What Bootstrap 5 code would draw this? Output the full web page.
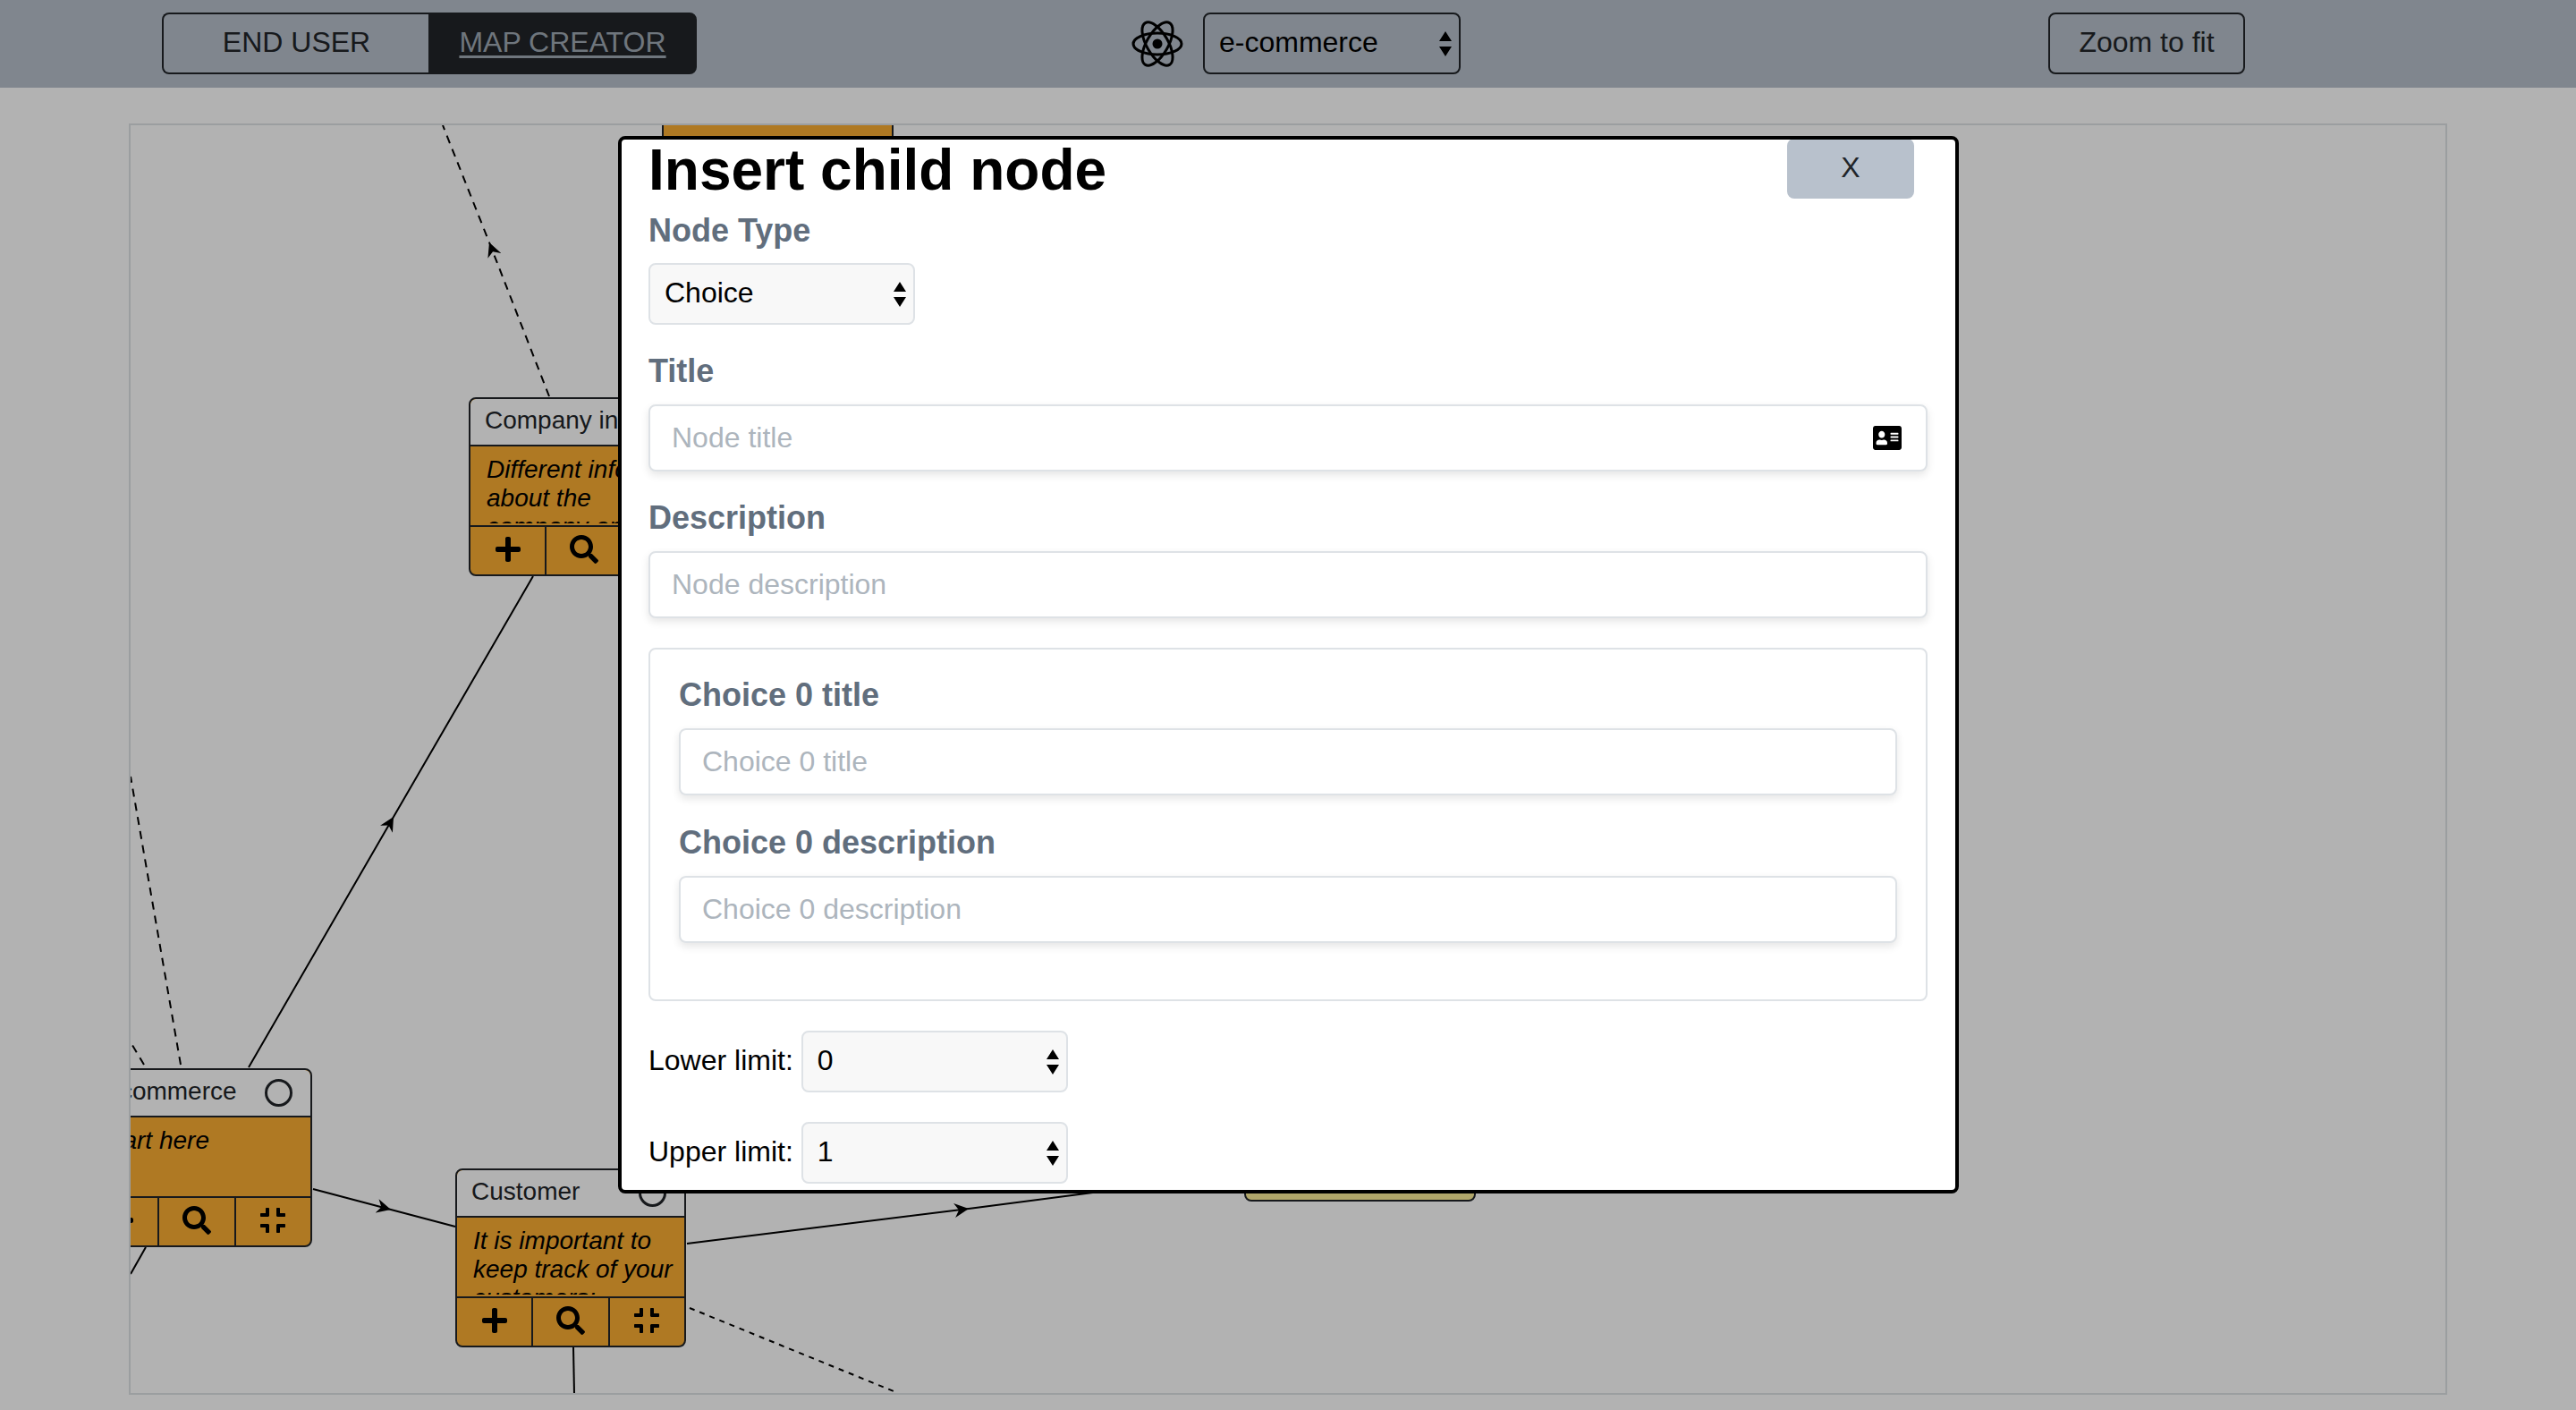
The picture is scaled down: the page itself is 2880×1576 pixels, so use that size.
<!DOCTYPE html>
<html lang="en">
<head>
    <meta charset="UTF-8">
    <title>Map creator</title>
    <link href="https://cdn.jsdelivr.net/npm/bootstrap@5.3.0/dist/css/bootstrap.min.css" rel="stylesheet">
    <style>
        html { font-size: 32px; }
        body { font-family: "Liberation Sans", Arial, sans-serif; background: #fff; color: #212529; }

        /* top bar */
        .top-bar { height: 98px; padding-top: 14px; background: #b8c1cc; }
        .top-btn { height: 69px; display: flex; align-items: center; justify-content: center; padding: 0 0 3px; border: 2px solid #212529; border-radius: 8px; font-size: 32px; color: #212529; background: transparent; }
        .mode-left { width: 299px; border-radius: 8px 0 0 8px; border-right: 0; }
        .mode-right { width: 300px; border-radius: 0 8px 8px 0; background: #212529; color: #a0a9b4; text-decoration: underline; text-underline-offset: 4px; }
        .mode-right:hover { background: #212529; color: #a0a9b4; }
        .map-col { padding-left: 18px; gap: 22px; }
        .map-select { width: 288px; height: 69px; background-color: transparent; border: 2px solid #212529; color: #000; }
        .zoom-btn { width: 220px; }

        /* shared select look, two native looking arrows */
        .arrow-select { padding: 0 40px 4px 16px; border-radius: 8px; font-size: 32px; background-image: url("data:image/svg+xml,%3Csvg xmlns='http://www.w3.org/2000/svg' viewBox='0 0 16 28'%3E%3Cpath d='M8 0l7 11H1zM8 28L1 17h14z'/%3E%3C/svg%3E"); background-repeat: no-repeat; background-position: right 7px center; background-size: 16px 28px; }
        .pick-select { width: 298px; height: 69px; background-color: #f8f8f8; border: 2px solid #dee2e6; color: #000; }

        /* canvas */
        .map-canvas { position: relative; height: 1421px; margin: 40px 144px 0; border: 2px solid #dee2e6; overflow: hidden; }
        .edge-layer { position: absolute; inset: 0; width: 100%; height: 100%; }
        .edge-layer .edge { fill: none; stroke: #000; stroke-width: 2; }
        .edge-layer .dashed { stroke-dasharray: 9 7; }
        .edge-layer .dotted { stroke-dasharray: 6 6; }

        .tree-node { position: absolute; width: 258px; height: 200px; display: flex; flex-direction: column; border: 2px solid #212529; border-radius: 8px; background: #fbae33; overflow: hidden; color: #000; font-size: 28px; }
        .node-head { flex: 0 0 53px; display: flex; align-items: center; justify-content: space-between; padding: 0 20px 4px 16px; background: #fff; border-bottom: 2px solid #212529; border-radius: 6px 6px 0 0; white-space: nowrap; color: #212529; }
        .node-ring { flex: none; width: 31px; height: 31px; margin-top: 4px; border: 3px solid #212529; border-radius: 50%; }
        .node-body { flex: 1 1 auto; padding: 10px 8px 0 18px; min-height: 0; }
        .node-text { height: 76px; overflow: hidden; font-style: italic; line-height: 32px; }
        .node-actions { flex: 0 0 55px; display: flex; border-top: 2px solid #212529; }
        .node-actions > div { flex: 1 1 0; display: flex; align-items: center; justify-content: center; padding-bottom: 3px; }
        .node-actions > div + div { border-left: 2px solid #212529; }
        .ico-plus, .ico-compress { width: 28px; height: 28px; }
        .ico-search { width: 32px; height: 32px; }

        .node-top { left: 594px; top: -60px; width: 259px; }
        .node-company { left: 378px; top: 304px; }
        .node-root { left: -55px; top: 1054px; }
        .node-customer { left: 363px; top: 1166px; }
        .node-other { left: 1245px; top: 1003px; width: 259px; background: #fdee98; }

        /* dialog */
        .modal-backdrop { --bs-backdrop-opacity: .3; }
        .child-dialog { position: fixed; z-index: 1060; left: 691px; top: 152px; width: 1499px; height: 1182px; padding: 0 31px 0 30px; background: #fff; border: 4px solid #000; border-radius: 8px; overflow: hidden; color: #000; }
        .dialog-title { margin: 0 0 11px; font-size: 64px; line-height: 69px; font-weight: 700; color: #000; }
        .close-btn { width: 142px; height: 67px; margin: -1px 15px 0 0; padding: 0 0 4px; background: #b8c1cc; border: 0; border-radius: 8px; font-size: 32px; color: #212529; }
        .field-label { margin: 0 0 16px; font-size: 36px; line-height: 43px; font-weight: 700; color: #616e7d; }
        .label-tight { margin-bottom: 15px; }
        .field-input { height: 75px; padding: 0 24px; font-size: 32px; border: 2px solid #dee2e6; border-radius: 8px; box-shadow: 0 4px 10px rgba(0, 0, 0, .1); }
        .field-input::placeholder { color: #adb5bd; }
        .field-gap { margin-bottom: 30px; }
        .input-wrap { position: relative; }
        .ico-card { position: absolute; right: 29px; top: 24px; width: 32px; height: 27px; }
        .choice-box { margin: 33px 0; padding: 29px 32px 32px; border: 2px solid #dee2e6; border-radius: 8px; }
        .choice-box .field-gap { margin-bottom: 31px; }
        .limit-row { display: flex; align-items: center; gap: 9px; margin-bottom: 33px; font-size: 32px; color: #000; }
        .limit-row label { padding-bottom: 4px; }
    </style>
</head>
<body>
    <nav class="top-bar">
        <div class="row g-0">
            <div class="col-4 d-flex justify-content-center">
                <div class="btn-group">
                    <button type="button" class="btn top-btn mode-left">END USER</button>
                    <a href="#" class="btn top-btn mode-right">MAP CREATOR</a>
                </div>
            </div>
            <div class="col-4 d-flex justify-content-center align-items-center map-col">
                <svg width="58" height="52" viewBox="0 0 58 52" fill="none" stroke="#000" stroke-width="3">
                    <ellipse cx="29" cy="26" rx="27" ry="12"/>
                    <ellipse cx="29" cy="26" rx="27" ry="12" transform="rotate(60 29 26)"/>
                    <ellipse cx="29" cy="26" rx="27" ry="12" transform="rotate(-60 29 26)"/>
                    <circle cx="29" cy="26" r="5.5" fill="#000" stroke="none"/>
                </svg>
                <select class="form-select arrow-select map-select">
                    <option>e-commerce</option>
                </select>
            </div>
            <div class="col-4 d-flex justify-content-center">
                <button type="button" class="btn top-btn zoom-btn">Zoom to fit</button>
            </div>
        </div>
    </nav>

    <div class="map-canvas">
        <svg class="edge-layer">
            <defs>
                <marker id="head" viewBox="0 0 16 16" refX="16" refY="8" markerWidth="16" markerHeight="16" markerUnits="userSpaceOnUse" orient="auto">
                    <path d="M16 8L0 0l5 8-5 8z"/>
                </marker>
            </defs>
            <g transform="translate(-146 -140)">
                <polyline class="edge dashed" points="614,443 547,271 495,140" marker-mid="url(#head)"/>
                <polyline class="edge" points="278,1193 440,913 596,644" marker-mid="url(#head)"/>
                <polyline class="edge" points="350,1329 437,1352 509,1371" marker-mid="url(#head)"/>
                <polyline class="edge" points="768,1390 1083,1351 1300,1323" marker-mid="url(#head)"/>
                <line class="edge dashed" x1="202" y1="1190" x2="146" y2="868"/>
                <line class="edge dashed" x1="161" y1="1190" x2="146" y2="1165"/>
                <line class="edge" x1="163" y1="1394" x2="146" y2="1424"/>
                <line class="edge" x1="641" y1="1505" x2="642" y2="1558"/>
                <line class="edge dotted" x1="771" y1="1462" x2="999" y2="1555"/>
            </g>
        </svg>

        <div class="tree-node node-top"></div>
        <div class="tree-node node-other"></div>

        <div class="tree-node node-company">
            <div class="node-head"><span>Company info</span><span class="node-ring"></span></div>
            <div class="node-body"><div class="node-text">Different info about the company and its products</div></div>
            <div class="node-actions">
                <div><svg class="ico-plus" viewBox="0 32 448 448"><use href="#fa-plus"/></svg></div>
                <div><svg class="ico-search" viewBox="0 0 512 512"><use href="#fa-search"/></svg></div>
                <div><svg class="ico-compress" viewBox="0 32 448 448"><use href="#fa-compress"/></svg></div>
            </div>
        </div>

        <div class="tree-node node-root">
            <div class="node-head"><span>e-commerce</span><span class="node-ring"></span></div>
            <div class="node-body"><div class="node-text">Start here</div></div>
            <div class="node-actions">
                <div><svg class="ico-plus" viewBox="0 32 448 448"><use href="#fa-plus"/></svg></div>
                <div><svg class="ico-search" viewBox="0 0 512 512"><use href="#fa-search"/></svg></div>
                <div><svg class="ico-compress" viewBox="0 32 448 448"><use href="#fa-compress"/></svg></div>
            </div>
        </div>

        <div class="tree-node node-customer">
            <div class="node-head"><span>Customer</span><span class="node-ring"></span></div>
            <div class="node-body"><div class="node-text">It is important to keep track of your customers:</div></div>
            <div class="node-actions">
                <div><svg class="ico-plus" viewBox="0 32 448 448"><use href="#fa-plus"/></svg></div>
                <div><svg class="ico-search" viewBox="0 0 512 512"><use href="#fa-search"/></svg></div>
                <div><svg class="ico-compress" viewBox="0 32 448 448"><use href="#fa-compress"/></svg></div>
            </div>
        </div>
    </div>

    <!-- icon shapes, used by the node action cells -->
    <svg width="0" height="0" class="position-absolute">
        <defs>
            <path id="fa-plus" d="M416 208H272V64c0-17.67-14.33-32-32-32h-32c-17.67 0-32 14.33-32 32v144H32c-17.67 0-32 14.33-32 32v32c0 17.67 14.33 32 32 32h144v144c0 17.67 14.33 32 32 32h32c17.67 0 32-14.33 32-32V304h144c17.67 0 32-14.33 32-32v-32c0-17.67-14.33-32-32-32z"/>
            <path id="fa-search" d="M505 442.7L405.3 343c-4.5-4.5-10.6-7-17-7H372c27.6-35.3 44-79.7 44-128C416 93.1 322.9 0 208 0S0 93.1 0 208s93.1 208 208 208c48.3 0 92.7-16.4 128-44v16.3c0 6.4 2.5 12.5 7 17l99.7 99.7c9.4 9.4 24.6 9.4 33.9 0l28.3-28.3c9.4-9.4 9.4-24.6.1-34zM208 336c-70.7 0-128-57.2-128-128 0-70.7 57.2-128 128-128 70.7 0 128 57.2 128 128 0 70.7-57.2 128-128 128z"/>
            <path id="fa-compress" d="M436 192H312c-13.3 0-24-10.7-24-24V44c0-6.6 5.4-12 12-12h40c6.6 0 12 5.4 12 12v84h84c6.6 0 12 5.4 12 12v40c0 6.6-5.4 12-12 12zm-276-24V44c0-6.6-5.4-12-12-12h-40c-6.6 0-12 5.4-12 12v84H12c-6.6 0-12 5.4-12 12v40c0 6.6 5.4 12 12 12h124c13.3 0 24-10.7 24-24zm0 300V344c0-13.3-10.7-24-24-24H12c-6.6 0-12 5.4-12 12v40c0 6.6 5.4 12 12 12h84v84c0 6.6 5.4 12 12 12h40c6.6 0 12-5.4 12-12zm192 0v-84h84c6.6 0 12-5.4 12-12v-40c0-6.6-5.4-12-12-12H312c-13.3 0-24 10.7-24 24v124c0 6.6 5.4 12 12 12h40c6.6 0 12-5.4 12-12z"/>
        </defs>
    </svg>

    <div class="modal-backdrop show"></div>

    <div class="child-dialog">
        <div class="d-flex justify-content-between align-items-start">
            <h1 class="dialog-title">Insert child node</h1>
            <button type="button" class="btn close-btn">X</button>
        </div>

        <form>
            <div class="field-gap">
                <h5 class="field-label label-tight">Node Type</h5>
                <select class="form-select arrow-select pick-select">
                    <option>Choice</option>
                </select>
            </div>
            <div class="field-gap">
                <h5 class="field-label">Title</h5>
                <div class="input-wrap">
                    <input type="text" class="form-control field-input" placeholder="Node title">
                    <svg class="ico-card" viewBox="0 32 576 448" preserveAspectRatio="none"><path d="M528 32H48C21.5 32 0 53.5 0 80v352c0 26.5 21.5 48 48 48h480c26.5 0 48-21.5 48-48V80c0-26.5-21.5-48-48-48zm-352 96c35.3 0 64 28.7 64 64s-28.7 64-64 64-64-28.7-64-64 28.7-64 64-64zm112 236.8c0 10.6-10 19.2-22.4 19.2H86.4C74 384 64 375.4 64 364.8v-19.2c0-31.8 30.1-57.6 67.2-57.6h5c12.3 5.1 25.7 8 39.8 8s27.6-2.9 39.8-8h5c37.1 0 67.2 25.8 67.2 57.6v19.2zM512 312c0 4.4-3.6 8-8 8H360c-4.4 0-8-3.6-8-8v-16c0-4.4 3.6-8 8-8h144c4.4 0 8 3.6 8 8v16zm0-64c0 4.4-3.6 8-8 8H360c-4.4 0-8-3.6-8-8v-16c0-4.4 3.6-8 8-8h144c4.4 0 8 3.6 8 8v16zm0-64c0 4.4-3.6 8-8 8H360c-4.4 0-8-3.6-8-8v-16c0-4.4 3.6-8 8-8h144c4.4 0 8 3.6 8 8v16z"/></svg>
                </div>
            </div>
            <div>
                <h5 class="field-label">Description</h5>
                <input type="text" class="form-control field-input" placeholder="Node description">
            </div>

            <div class="choice-box">
                <div class="field-gap">
                    <h5 class="field-label">Choice 0 title</h5>
                    <input type="text" class="form-control field-input" placeholder="Choice 0 title">
                </div>
                <div class="field-gap">
                    <h5 class="field-label">Choice 0 description</h5>
                    <input type="text" class="form-control field-input" placeholder="Choice 0 description">
                </div>
            </div>

            <div class="limit-row">
                <label>Lower limit:</label>
                <select class="form-select arrow-select pick-select">
                    <option>0</option>
                </select>
            </div>
            <div class="limit-row">
                <label>Upper limit:</label>
                <select class="form-select arrow-select pick-select">
                    <option>1</option>
                </select>
            </div>
        </form>
    </div>
</body>
</html>
